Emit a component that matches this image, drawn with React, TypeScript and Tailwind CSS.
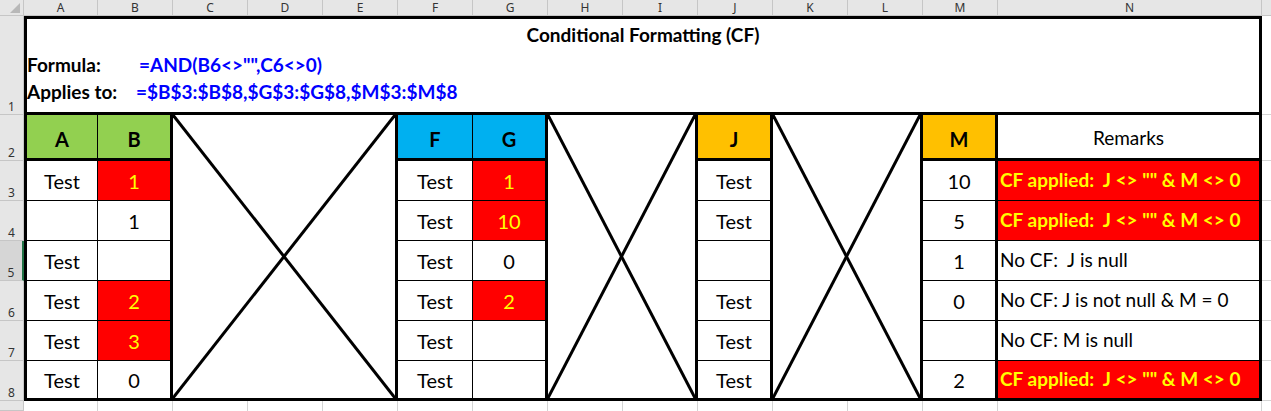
import React from 'react';

const font = { fontFamily: 'Lato, "Liberation Sans", sans-serif' };

type DataRow = {
  a: string;
  b: string;
  bRed?: boolean;
  g: string;
  gRed?: boolean;
  j: string;
  m: string;
  n: string;
  nRed?: boolean;
};

const rows: DataRow[] = [
  { a: 'Test', b: '1', bRed: true, g: '1', gRed: true, j: 'Test', m: '10', n: 'CF applied:  J <> "" & M <> 0', nRed: true },
  { a: '', b: '1', g: '10', gRed: true, j: 'Test', m: '5', n: 'CF applied:  J <> "" & M <> 0', nRed: true },
  { a: 'Test', b: '', g: '0', j: '', m: '1', n: 'No CF:  J is null' },
  { a: 'Test', b: '2', bRed: true, g: '2', gRed: true, j: 'Test', m: '0', n: 'No CF: J is not null & M = 0' },
  { a: 'Test', b: '3', bRed: true, g: '', j: 'Test', m: '', n: 'No CF: M is null' },
  { a: 'Test', b: '0', g: '', j: 'Test', m: '2', n: 'CF applied:  J <> "" & M <> 0', nRed: true },
];

const letters = ['A', 'B', 'C', 'D', 'E', 'F', 'G', 'H', 'I', 'J', 'K', 'L', 'M', 'N'];

const RowHead = ({ n, active }: { n: string; active?: boolean }) => (
  <div
    className={
      'flex items-end justify-center border-b border-r border-[#c6c6c6] pb-[1px] text-[12px] leading-none text-[#333] ' +
      (active ? 'bg-[#d6d6d6] border-r-2 border-r-[#217346]' : 'bg-[#e6e6e6]')
    }
    style={{ fontFamily: '"Noto Sans", sans-serif' }}
  >
    {n}
  </div>
);

const Cross = () => (
  <svg className="h-full w-full" preserveAspectRatio="none" viewBox="0 0 100 100">
    <line x1="0" y1="0" x2="100" y2="100" stroke="black" strokeWidth="3" vectorEffect="non-scaling-stroke" />
    <line x1="100" y1="0" x2="0" y2="100" stroke="black" strokeWidth="3" vectorEffect="non-scaling-stroke" />
  </svg>
);

export default function App() {
  return (
    <div className="h-[411px] w-[1271px] overflow-hidden bg-white" style={font}>
      <div className="grid h-full grid-cols-[24px_74px_75px_75px_75px_75px_75px_75px_75px_75px_75px_75px_75px_75px_264px_1fr] grid-rows-[16px_99px_46px_40px_40px_40px_40px_40px_40px_1fr]">
        {/* column headers */}
        <div className="relative border-b border-r border-[#c6c6c6] bg-[#e6e6e6]">
          <svg className="absolute bottom-[2px] right-[3px]" width="10" height="10" viewBox="0 0 10 10">
            <polygon points="10,0 10,10 0,10" fill="#b8b8b8" />
          </svg>
        </div>
        {letters.map((l) => (
          <div
            key={l}
            className="flex items-center justify-center border-b border-r border-[#c6c6c6] bg-[#e6e6e6] text-[12px] leading-none text-[#333]"
            style={{ fontFamily: '"Noto Sans", sans-serif' }}
          >
            {l}
          </div>
        ))}
        <div className="border-b border-[#c6c6c6] bg-[#e6e6e6]" />

        {/* row 1 */}
        <RowHead n="1" />
        <div className="col-span-14 flex flex-col border-[3px] border-black pt-[4px] font-bold text-[19px] leading-[24px]">
          <div className="text-center">Conditional Formatting (CF)</div>
          <div className="mt-[6px] flex">
            <span className="w-[112px] text-black">Formula:</span>
            <span className="text-[#0000ff]">=AND(B6&lt;&gt;"",C6&lt;&gt;0)</span>
          </div>
          <div className="mt-[3px] flex">
            <span className="w-[109px] text-black">Applies to:</span>
            <span className="text-[#0000ff]">=$B$3:$B$8,$G$3:$G$8,$M$3:$M$8</span>
          </div>
        </div>
        <div className="border-b border-[#d4d4d4]" />

        {/* row 2 headers */}
        <RowHead n="2" />
        <div className="flex items-center justify-center border-b-[3px] border-l-[3px] border-r border-black bg-[#92d050] pt-[5px] text-[20px] font-bold">A</div>
        <div className="flex items-center justify-center border-b-[3px] border-r-[3px] border-black bg-[#92d050] pt-[5px] text-[20px] font-bold">B</div>
        <div className="col-span-3 row-span-7 border-b-[3px] border-r-[3px] border-black"><Cross /></div>
        <div className="flex items-center justify-center border-b-[3px] border-r border-black bg-[#00b0f0] pt-[5px] text-[20px] font-bold">F</div>
        <div className="flex items-center justify-center border-b-[3px] border-r-[3px] border-black bg-[#00b0f0] pt-[5px] text-[20px] font-bold">G</div>
        <div className="col-span-2 row-span-7 border-b-[3px] border-r-[3px] border-black"><Cross /></div>
        <div className="flex items-center justify-center border-b-[3px] border-r-[3px] border-black bg-[#ffc000] pt-[5px] text-[20px] font-bold">J</div>
        <div className="col-span-2 row-span-7 border-b-[3px] border-r-[3px] border-black"><Cross /></div>
        <div className="flex items-center justify-center border-b-[3px] border-r-[3px] border-black bg-[#ffc000] pt-[5px] text-[20px] font-bold">M</div>
        <div className="flex items-center justify-center border-b-[3px] border-r-[3px] border-black pt-[3px] text-[19px]">Remarks</div>
        <div className="border-b border-[#d4d4d4]" />

        {/* data rows */}
        {rows.map((r, i) => {
          const last = i === rows.length - 1;
          const bb = last ? 'border-b-[3px]' : 'border-b';
          return (
            <React.Fragment key={i}>
              <RowHead n={String(i + 3)} active={i === 2} />
              <div className={`flex items-center justify-center border-l-[3px] border-r border-black text-[20px] ${bb}`}>{r.a}</div>
              <div className={`flex items-center justify-center border-r-[3px] border-black text-[20px] ${bb} ${r.bRed ? 'bg-[#ff0000] text-[#ffff00]' : ''}`}>{r.b}</div>
              <div className={`flex items-center justify-center border-r border-black text-[20px] ${bb}`}>Test</div>
              <div className={`flex items-center justify-center border-r-[3px] border-black text-[20px] ${bb} ${r.gRed ? 'bg-[#ff0000] text-[#ffff00]' : ''}`}>{r.g}</div>
              <div className={`flex items-center justify-center border-r-[3px] border-black text-[20px] ${bb}`}>{r.j}</div>
              <div className={`flex items-center justify-center border-r-[3px] border-black text-[20px] ${bb}`}>{r.m}</div>
              <div
                className={`flex items-center whitespace-pre border-r-[3px] border-black pl-[2px] text-[19px] ${bb} ${
                  r.nRed ? 'bg-[#ff0000] font-bold text-[#ffff00]' : ''
                }`}
              >
                {r.n}
              </div>
              <div className="border-b border-[#d4d4d4]" />
            </React.Fragment>
          );
        })}

        {/* row 9, cut off */}
        <RowHead n="" />
        {letters.map((l) => (
          <div key={l} className="border-r border-[#d4d4d4]" />
        ))}
        <div />
      </div>
    </div>
  );
}
